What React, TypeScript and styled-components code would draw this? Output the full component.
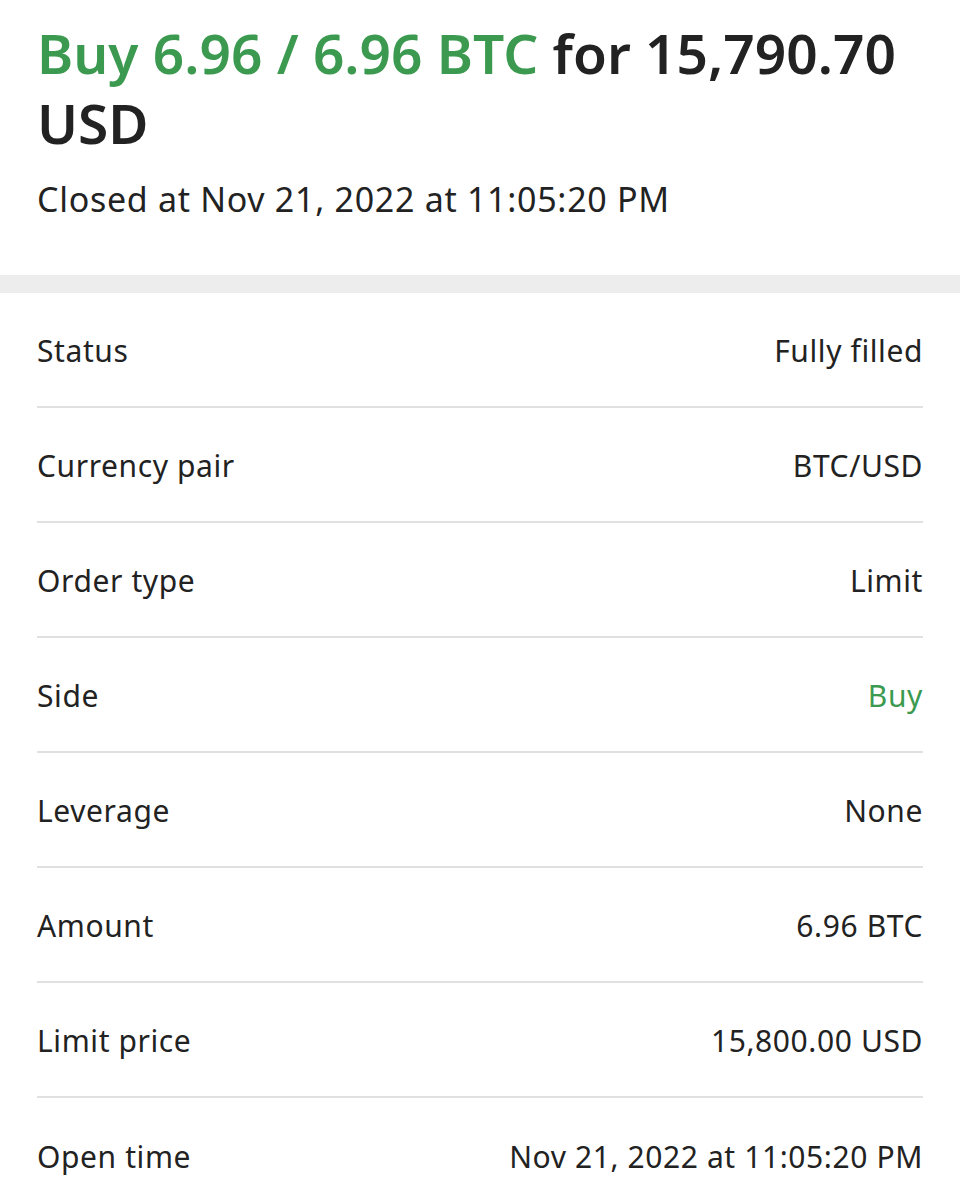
import styled, { createGlobalStyle } from 'styled-components'

const GlobalStyle = createGlobalStyle`
  html, body {
    margin: 0;
    padding: 0;
    background: #ffffff;
  }
  body {
    font-family: 'Noto Sans', 'Open Sans', sans-serif;
    color: #222222;
  }
`

const Page = styled.div`
  width: 960px;
  height: 1200px;
  overflow: hidden;
  background: #ffffff;
`

const Header = styled.header`
  padding: 18px 37px 0;
  height: 275px;
  box-sizing: border-box;
`

const Title = styled.h1`
  margin: 0;
  font-size: 55px;
  line-height: 70px;
  font-weight: 600;
  letter-spacing: 0;
  color: #222222;
`

const Green = styled.span`
  color: #3b9a4f;
`

const Subtitle = styled.p`
  margin: 21px 0 0;
  font-size: 34px;
  line-height: 40px;
  letter-spacing: 0.7px;
  color: #222222;
`

const Band = styled.div`
  height: 18px;
  background: #ededed;
`

const List = styled.div`
  padding: 0 37px;
`

const Row = styled.div`
  display: flex;
  justify-content: space-between;
  align-items: center;
  box-sizing: border-box;
  height: 115px;
  padding-top: 2px;
  border-bottom: 2px solid #e0e0e0;
  font-size: 30px;
  letter-spacing: 0.6px;

  &:last-child {
    border-bottom: none;
  }
`

const Label = styled.span`
  color: #222222;
`

const Value = styled.span<{ $accent?: boolean }>`
  color: ${({ $accent }) => ($accent ? '#3b9a4f' : '#222222')};
`

const rows: { label: string; value: string; accent?: boolean }[] = [
  { label: 'Status', value: 'Fully filled' },
  { label: 'Currency pair', value: 'BTC/USD' },
  { label: 'Order type', value: 'Limit' },
  { label: 'Side', value: 'Buy', accent: true },
  { label: 'Leverage', value: 'None' },
  { label: 'Amount', value: '6.96 BTC' },
  { label: 'Limit price', value: '15,800.00 USD' },
  { label: 'Open time', value: 'Nov 21, 2022 at 11:05:20 PM' },
]

export default function App() {
  return (
    <Page>
      <GlobalStyle />
      <Header>
        <Title>
          <Green>Buy 6.96 / 6.96 BTC</Green> for 15,790.70 USD
        </Title>
        <Subtitle>Closed at Nov 21, 2022 at 11:05:20 PM</Subtitle>
      </Header>
      <Band />
      <List>
        {rows.map((r) => (
          <Row key={r.label}>
            <Label>{r.label}</Label>
            <Value $accent={r.accent}>{r.value}</Value>
          </Row>
        ))}
      </List>
    </Page>
  )
}
